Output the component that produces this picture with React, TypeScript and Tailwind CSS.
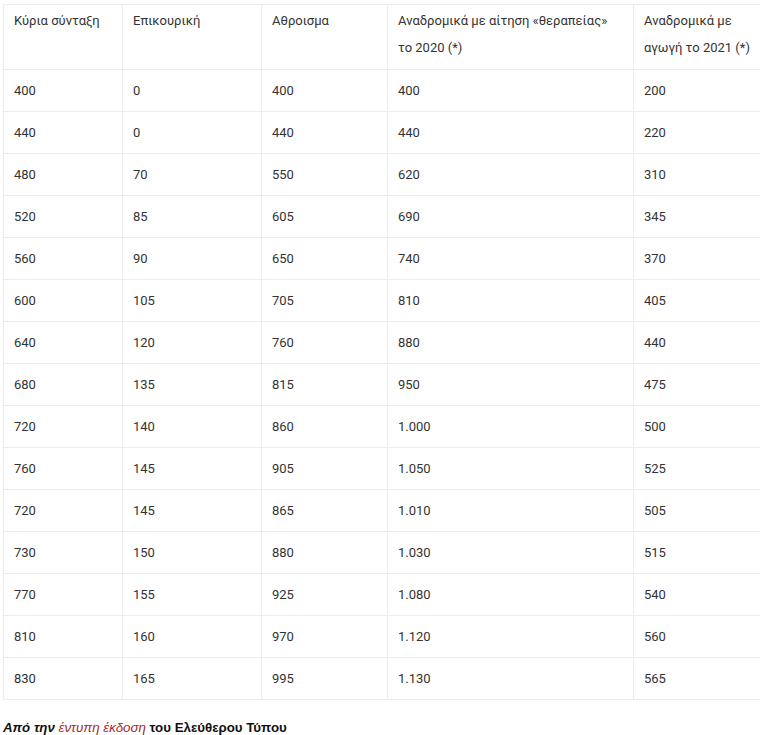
import React from 'react';

const headers = [
  'Κύρια σύνταξη',
  'Επικουρική',
  'Αθροισμα',
  'Αναδρομικά με αίτηση «θεραπείας» το 2020 (*)',
  'Αναδρομικά με αγωγή το 2021 (*)',
];

const rows: string[][] = [
  ['400', '0', '400', '400', '200'],
  ['440', '0', '440', '440', '220'],
  ['480', '70', '550', '620', '310'],
  ['520', '85', '605', '690', '345'],
  ['560', '90', '650', '740', '370'],
  ['600', '105', '705', '810', '405'],
  ['640', '120', '760', '880', '440'],
  ['680', '135', '815', '950', '475'],
  ['720', '140', '860', '1.000', '500'],
  ['760', '145', '905', '1.050', '525'],
  ['720', '145', '865', '1.010', '505'],
  ['730', '150', '880', '1.030', '515'],
  ['770', '155', '925', '1.080', '540'],
  ['810', '160', '970', '1.120', '560'],
  ['830', '165', '995', '1.130', '565'],
];

const widths = ['w-[119px]', 'w-[139px]', 'w-[126px]', 'w-[246px]', 'w-[140px]'];

export default function App() {
  return (
    <div className="w-[760px] h-[735px] overflow-hidden bg-white">
      <div className="pl-[3px] pt-[4px]">
        <table
          className="border-collapse table-fixed w-[770px] text-[13px] text-[#333]"
          style={{ fontFamily: 'Roboto, "Noto Sans", sans-serif' }}
        >
          <colgroup>
            {widths.map((w, i) => (
              <col key={i} className={w} />
            ))}
          </colgroup>
          <thead>
            <tr className="h-[65px]">
              {headers.map((h) => (
                <th
                  key={h}
                  className="border border-[#ececec] px-[10px] pt-[2px] pb-[6px] text-left align-top font-normal leading-[27px]"
                >
                  {h}
                </th>
              ))}
            </tr>
          </thead>
          <tbody>
            {rows.map((r, i) => (
              <tr key={i} className="h-[42px]">
                {r.map((c, j) => (
                  <td key={j} className="border border-[#ececec] px-[10px] align-middle leading-[24px]">
                    {c}
                  </td>
                ))}
              </tr>
            ))}
          </tbody>
        </table>
        <p
          className="mt-[20px] text-[13.3px] text-[#111] leading-[16px]"
          style={{ fontFamily: '"Liberation Sans", Arial, sans-serif' }}
        >
          <strong className="italic">Από την </strong>
          <em className="text-[#a52a2a]">έντυπη έκδοση</em>
          <strong> του Ελεύθερου Τύπου</strong>
        </p>
      </div>
    </div>
  );
}
